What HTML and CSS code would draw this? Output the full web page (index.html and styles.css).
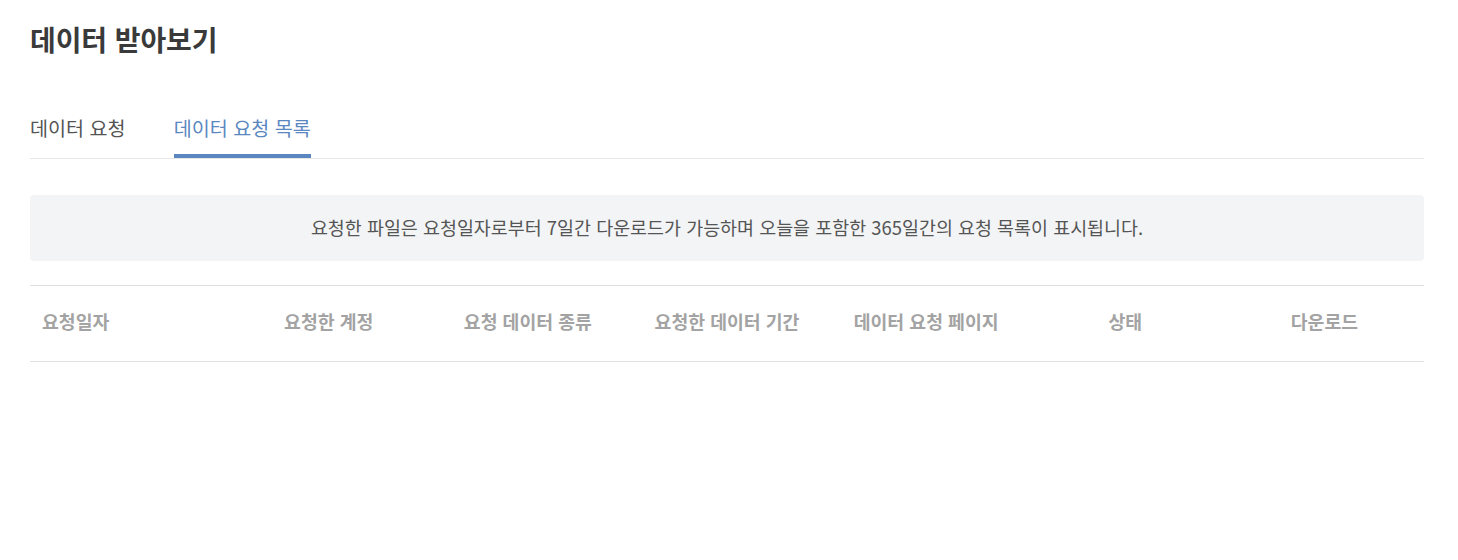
FILE: index.html
```html
<!DOCTYPE html>
<html lang="ko">
<head>
<meta charset="utf-8">
<title>데이터 받아보기</title>
<link rel="stylesheet" href="styles.css">
</head>
<body>
<div class="page">
  <h1 class="title">데이터 받아보기</h1>
  <div class="tabs">
    <div class="tab">데이터 요청</div>
    <div class="tab active">데이터 요청 목록</div>
  </div>
  <div class="notice">요청한 파일은 요청일자로부터 7일간 다운로드가 가능하며 오늘을 포함한 365일간의 요청 목록이 표시됩니다.</div>
  <div class="table">
    <div class="thead">
      <div class="th first">요청일자</div>
      <div class="th">요청한 계정</div>
      <div class="th">요청 데이터 종류</div>
      <div class="th">요청한 데이터 기간</div>
      <div class="th">데이터 요청 페이지</div>
      <div class="th">상태</div>
      <div class="th">다운로드</div>
    </div>
  </div>
</div>
</body>
</html>
```
FILE: styles.css
```css
* { box-sizing: border-box; }
html, body {
  margin: 0;
  padding: 0;
  background: #fff;
}
body {
  font-family: "Noto Sans CJK KR", "Noto Sans", sans-serif;
  color: #333;
}
.page {
  padding: 19px 34px 0 30px;
}
.title {
  margin: 0;
  font-size: 28px;
  line-height: 40px;
  font-weight: 700;
  color: #3a3a3a;
  letter-spacing: -0.1px;
}
.tabs {
  display: flex;
  gap: 48px;
  margin-top: 56px;
  border-bottom: 1px solid #e6e6e6;
}
.tab {
  font-size: 19.6px;
  line-height: 26px;
  padding-bottom: 13px;
  border-bottom: 4px solid transparent;
  color: #555;
}
.tab.active {
  color: #5b87c1;
  border-bottom-color: #5b87c1;
}
.notice {
  margin-top: 36px;
  height: 66px;
  padding-bottom: 2px;
  background: #f3f4f6;
  border-radius: 4px;
  display: flex;
  align-items: center;
  justify-content: center;
  font-size: 18.45px;
  color: #555;
}
.table {
  margin-top: 24px;
  border-top: 1px solid #e0e0e0;
  border-bottom: 1px solid #e0e0e0;
}
.thead {
  display: grid;
  grid-template-columns: repeat(7, 1fr);
  height: 75px;
  padding-bottom: 5px;
  align-items: center;
}
.th {
  font-size: 18.3px;
  font-weight: 700;
  color: #a3a3a3;
  text-align: center;
}
.th.first {
  text-align: left;
  padding-left: 12px;
}
```
